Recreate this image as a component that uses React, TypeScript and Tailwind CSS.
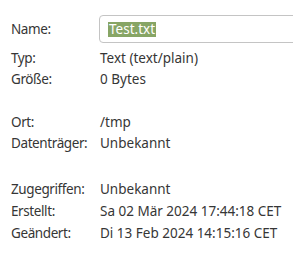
import React from "react";

const Row = ({ label, value, h = "h-[21px]" }: { label: string; value: string; h?: string }) => (
  <div className={`flex items-center ${h}`}>
    <div className="w-[89px] shrink-0 tracking-[-0.4px] whitespace-nowrap">{label}</div>
    <div className="whitespace-nowrap">{value}</div>
  </div>
);

export default function App() {
  return (
    <div
      className="w-[293px] h-[257px] bg-white overflow-hidden pl-[11px] text-[13.5px] text-[#363636]"
      style={{ fontFamily: '"Noto Sans", sans-serif' }}
    >
      <div className="flex items-center h-[28px] mt-[15px]">
        <div className="w-[88px] shrink-0 tracking-[-0.4px]">Name:</div>
        <div className="flex-1 h-[28px] border border-[#c4c4c4] rounded-[4px] flex items-center pl-[8px] -mr-[10px]">
          <span className="bg-[#87a565] text-white leading-[15px] px-[1px]">Test.txt</span>
        </div>
      </div>
      <div className="mt-[5px]">
        <Row label="Typ:" value="Text (text/plain)" />
        <Row label="Größe:" value="0 Bytes" />
      </div>
      <div className="mt-[22px]">
        <Row label="Ort:" value="/tmp" />
        <Row label="Datenträger:" value="Unbekannt" />
      </div>
      <div className="mt-[24px]">
        <Row label="Zugegriffen:" value="Unbekannt" h="h-[22px]" />
        <Row label="Erstellt:" value="Sa 02 Mär 2024 17:44:18 CET" h="h-[22px]" />
        <Row label="Geändert:" value="Di 13 Feb 2024 14:15:16 CET" h="h-[22px]" />
      </div>
    </div>
  );
}
